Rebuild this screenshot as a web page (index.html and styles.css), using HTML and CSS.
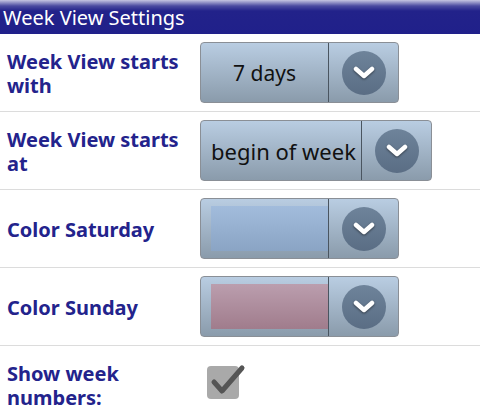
FILE: index.html
```html
<html>
<head>
  <meta http-equiv="Content-type" content="text/html;charset=UTF-8">
  <title>Week View Settings</title>
  <link rel="stylesheet" href="styles.css">
</head>
<body>
  <div id="header">Week View Settings</div>
  <div id="settings">
    <div class="row">
      <div class="label">Week View starts with</div>
      <div class="spinner">
        <div class="value">7 days</div>
        <div class="arrow"><div class="circle"><svg width="24" height="16" viewBox="0 0 24 16"><path d="M4 4 L12 11 L20 4" fill="none" stroke="#fff" stroke-width="4.5" stroke-linecap="round" stroke-linejoin="round"/></svg></div></div>
      </div>
    </div>
    <div class="row">
      <div class="label">Week View starts at</div>
      <div class="spinner wide">
        <div class="value">begin of week</div>
        <div class="arrow"><div class="circle"><svg width="24" height="16" viewBox="0 0 24 16"><path d="M4 4 L12 11 L20 4" fill="none" stroke="#fff" stroke-width="4.5" stroke-linecap="round" stroke-linejoin="round"/></svg></div></div>
      </div>
    </div>
    <div class="row">
      <div class="label">Color Saturday</div>
      <div class="spinner">
        <div class="value swatchbox"><div class="swatch sat"></div></div>
        <div class="arrow"><div class="circle"><svg width="24" height="16" viewBox="0 0 24 16"><path d="M4 4 L12 11 L20 4" fill="none" stroke="#fff" stroke-width="4.5" stroke-linecap="round" stroke-linejoin="round"/></svg></div></div>
      </div>
    </div>
    <div class="row">
      <div class="label">Color Sunday</div>
      <div class="spinner">
        <div class="value swatchbox"><div class="swatch sun"></div></div>
        <div class="arrow"><div class="circle"><svg width="24" height="16" viewBox="0 0 24 16"><path d="M4 4 L12 11 L20 4" fill="none" stroke="#fff" stroke-width="4.5" stroke-linecap="round" stroke-linejoin="round"/></svg></div></div>
      </div>
    </div>
    <div class="row last">
      <div class="label">Show week numbers:</div>
      <div class="checkbox">
        <svg width="40" height="40" viewBox="0 0 40 40">
          <rect x="1" y="4" width="32" height="33" rx="4" fill="#a9a9a9"/>
          <path d="M8 20 L16 29 L36 6" fill="none" stroke="#555" stroke-width="5" stroke-linecap="round" stroke-linejoin="round"/>
        </svg>
      </div>
    </div>
  </div>
</body>
</html>
```

FILE: styles.css
```css
body{
    margin:0;
    background:white;
    font-family:"Noto Sans", "Open Sans", sans-serif;
    width:480px;
    height:418px;
    overflow:hidden;
}
#header{
    height:34px;
    line-height:35px;
    padding-left:3px;
    color:white;
    font-size:20px;
    background:linear-gradient(to bottom, #c6c6e2 0px, #4a4aa0 6px, #22228a 11px, #20208a 100%);
}
.row{
    display:flex;
    align-items:center;
    height:77px;
    border-bottom:1px solid #dcdcdc;
}
.row.last{
    border-bottom:none;
}
.label{
    width:186px;
    padding-left:7px;
    padding-top:2px;
    font-size:20px;
    font-weight:bold;
    line-height:24px;
    color:#23238c;
}
.spinner{
    display:flex;
    margin-left:7px;
    width:199px;
    height:61px;
    border:1px solid #8a8f96;
    border-radius:4px;
    background:linear-gradient(to bottom, #b9cde2, #8a9bab);
    box-sizing:border-box;
}
.spinner.wide{
    width:232px;
}
.value{
    flex:1;
    display:flex;
    align-items:center;
    justify-content:center;
    font-size:21px;
    color:#111;
    border-right:1px solid #4a5560;
}
.spinner.wide .value{
    justify-content:flex-start;
    padding-left:10px;
    font-size:22px;
}
.value.swatchbox{
    justify-content:flex-start;
    padding-left:10px;
}
.arrow{
    width:69px;
    display:flex;
    align-items:center;
    justify-content:center;
}
.circle{
    width:44px;
    height:44px;
    border-radius:50%;
    background:linear-gradient(to bottom, #6e839a, #5a6d84);
    display:flex;
    align-items:center;
    justify-content:center;
}
.circle svg{
    filter:drop-shadow(0 1px 1px rgba(0,0,0,0.5));
}
.swatch{
    width:117px;
    height:45px;
}
.swatch.sat{
    background:linear-gradient(to bottom, #a2bcdc, #8aa4c4);
}
.swatch.sun{
    background:linear-gradient(to bottom, #bb9eae, #a07c8c);
}
.checkbox{
    margin-left:13px;
    margin-top:-6px;
}
```
